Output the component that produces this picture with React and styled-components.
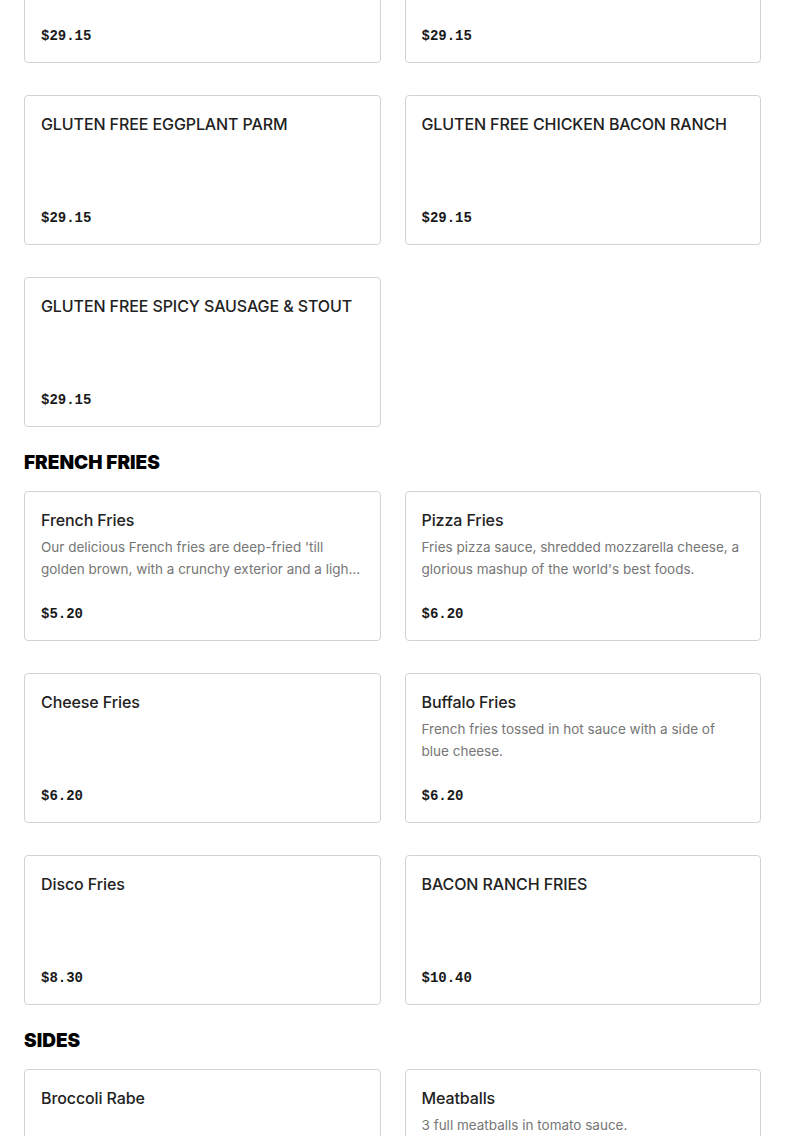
import React from 'react'
import styled, { createGlobalStyle } from 'styled-components'

const menu = [
  {
    name: null,
    items: [
      { title: 'GLUTEN FREE MARGHERITA', price: '$29.15' },
      { title: 'GLUTEN FREE BUFFALO CHICKEN', price: '$29.15' },
      { title: 'GLUTEN FREE EGGPLANT PARM', price: '$29.15' },
      { title: 'GLUTEN FREE CHICKEN BACON RANCH', price: '$29.15' },
      { title: 'GLUTEN FREE SPICY SAUSAGE & STOUT', price: '$29.15' },
    ],
  },
  {
    name: 'FRENCH FRIES',
    items: [
      {
        title: 'French Fries',
        desc: "Our delicious French fries are deep-fried 'till golden brown, with a crunchy exterior and a light fluffy interior.",
        price: '$5.20',
      },
      {
        title: 'Pizza Fries',
        desc: "Fries pizza sauce, shredded mozzarella cheese, a glorious mashup of the world's best foods.",
        price: '$6.20',
      },
      { title: 'Cheese Fries', price: '$6.20' },
      {
        title: 'Buffalo Fries',
        desc: 'French fries tossed in hot sauce with a side of blue cheese.',
        price: '$6.20',
      },
      { title: 'Disco Fries', price: '$8.30' },
      { title: 'BACON RANCH FRIES', price: '$10.40' },
    ],
  },
  {
    name: 'SIDES',
    items: [
      { title: 'Broccoli Rabe', price: '$7.30' },
      { title: 'Meatballs', desc: '3 full meatballs in tomato sauce.', price: '$8.30' },
    ],
  },
]

function App() {
  return (
    <>
      <GlobalStyle />
      <Page>
        {menu.map((section, i) => (
          <Section key={i}>
            {section.name && <SectionTitle>{section.name}</SectionTitle>}
            <Grid>
              {section.items.map((item) => (
                <Card key={item.title}>
                  <ItemTitle>{item.title}</ItemTitle>
                  {item.desc && <Desc>{item.desc}</Desc>}
                  <Price>{item.price}</Price>
                </Card>
              ))}
            </Grid>
          </Section>
        ))}
      </Page>
    </>
  )
}

export default App

const GlobalStyle = createGlobalStyle`
  html, body {
    margin: 0;
    padding: 0;
    background: #ffffff;
    overflow: hidden;
  }
  body {
    font-family: Inter, "Liberation Sans", sans-serif;
    color: #191919;
  }
`

const Page = styled.div`
  padding: 0 24px;
  margin-top: -87px;
`

const Section = styled.section`
  & + & {
    margin-top: 24px;
  }
`

const SectionTitle = styled.h2`
  margin: 0 0 16px;
  font-family: Inter, "Liberation Sans", sans-serif;
  font-size: 19px;
  line-height: 24px;
  font-weight: 900;
  color: #000;
`

const Grid = styled.div`
  display: grid;
  grid-template-columns: 1fr 1fr;
  column-gap: 24px;
  row-gap: 32px;
`

const Card = styled.div`
  height: 150px;
  box-sizing: border-box;
  border: 1px solid #d3d3d3;
  border-radius: 4px;
  padding: 16px 16px 15px;
  display: flex;
  flex-direction: column;
`

const ItemTitle = styled.div`
  font-size: 16px;
  line-height: 24px;
  font-weight: 500;
  letter-spacing: -0.1px;
  color: #222;
  white-space: nowrap;
  overflow: hidden;
  text-overflow: ellipsis;
`

const Desc = styled.div`
  margin-top: 4px;
  font-size: 13.5px;
  line-height: 22px;
  color: #767676;
  display: -webkit-box;
  -webkit-line-clamp: 2;
  -webkit-box-orient: vertical;
  overflow: hidden;
`

const Price = styled.div`
  margin-top: auto;
  font-family: "Liberation Mono", monospace;
  font-size: 14px;
  line-height: 22px;
  font-weight: 700;
  color: #191919;
`
